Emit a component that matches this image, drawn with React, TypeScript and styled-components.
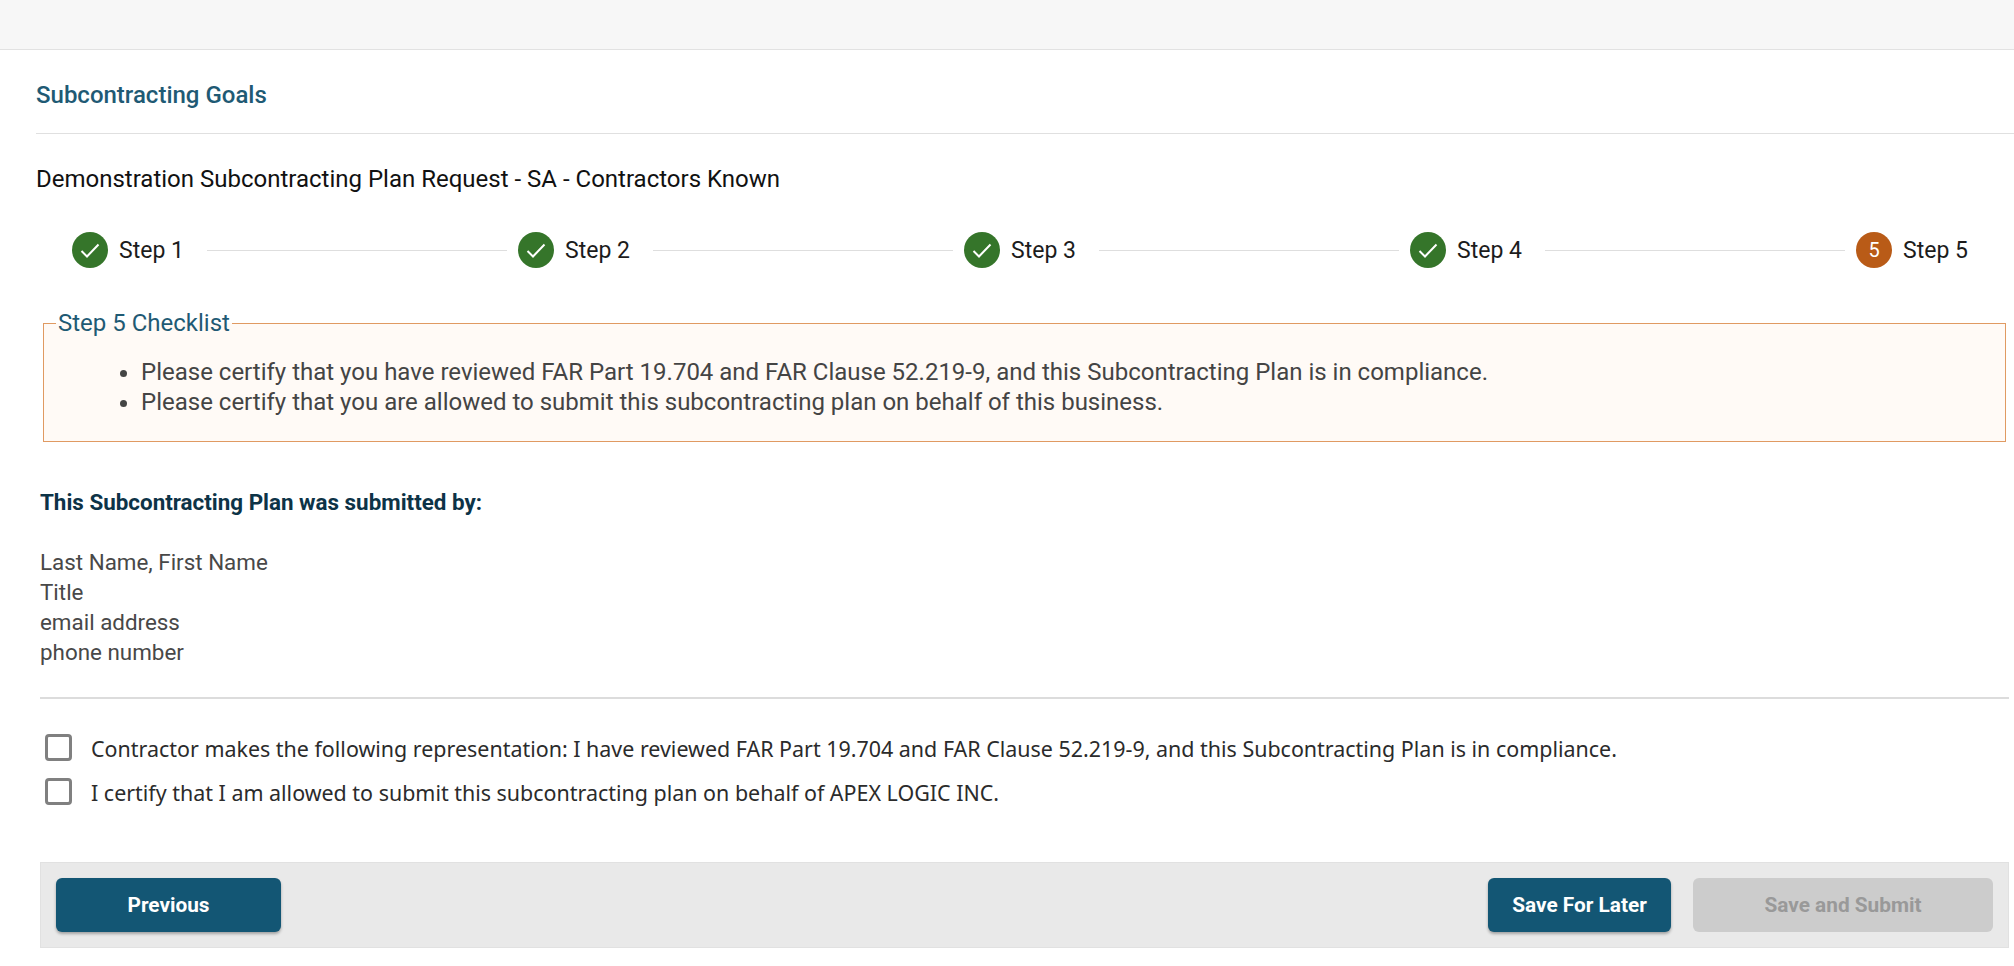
import React from 'react';
import styled, { createGlobalStyle } from 'styled-components';

const Global = createGlobalStyle`
  html, body { margin: 0; padding: 0; background: #fff; }
  body { font-family: Roboto, "Liberation Sans", sans-serif; overflow: hidden; }
  * { box-sizing: border-box; }
`;
const Page = styled.div`
  width: 2014px; height: 966px; display: flex; flex-direction: column; overflow: hidden;
`;
const TopBar = styled.div`
  height: 50px; flex: none; background: #f7f7f7; border-bottom: 1px solid #e2e2e2;
`;
const Content = styled.div`
  padding-left: 36px; display: flex; flex-direction: column;
`;
const Heading = styled.h2`
  margin: 0; height: 84px; line-height: 90px; font-size: 24px; font-weight: 500; color: #1f5a74;
  border-bottom: 1px solid #e0e0e0;
`;
const PlanTitle = styled.div`
  margin-top: 28px; line-height: 34px; font-size: 24px; color: #111;
`;
const Stepper = styled.ol`
  list-style: none; margin: 0; padding: 0 46px 0 36px; margin-top: 36px; height: 36px;
  display: flex; align-items: center;
`;
const Step = styled.li`
  display: flex; align-items: center; gap: 11px; font-size: 23px; color: #1c1c1c; flex: none;
`;
const Circle = styled.span<{ $active?: boolean }>`
  width: 36px; height: 36px; border-radius: 50%; display: flex; align-items: center; justify-content: center;
  background: ${p => (p.$active ? '#b95b17' : '#35752a')}; color: #fff; font-size: 20px;
`;
const Connector = styled.li`
  flex: 1; height: 1px; background: #dedede; margin: 0 11px 0 23px;
`;
const Fieldset = styled.fieldset`
  margin: 41px 8px 0 7px; padding: 0; height: 133px; border: 1px solid #e09a62; background: #fffaf6;
  min-width: 0;
`;
const Legend = styled.legend`
  margin-left: 12px; padding: 0 2px; font-size: 24px; line-height: 28px; color: #1f5a74;
`;
const Bullets = styled.ul`
  margin: 20px 0 0; padding-left: 97px; font-size: 24px; line-height: 30px; color: #444;
`;
const Section = styled.div`
  padding-left: 4px; margin-right: 5px; display: flex; flex-direction: column;
`;
const SubmittedBy = styled.div`
  margin-top: 46px; font-size: 22.4px; line-height: 28px; font-weight: 700; color: #0d3347;
`;
const Contact = styled.div`
  margin-top: 31px; font-size: 22.4px; line-height: 30px; color: #484848;
`;
const Rule = styled.hr`
  margin: 30px 0 0; border: 0; height: 2px; background: #dcdcdc;
`;
const Checks = styled.div`
  margin-top: 32px; display: flex; flex-direction: column; gap: 10px;
`;
const CheckRow = styled.label`
  display: flex; align-items: center; gap: 19px; padding-left: 5px; height: 34px;
  font-family: "Noto Sans", sans-serif; font-size: 21.45px; color: #2b2b2b;
`;
const Box = styled.span`
  width: 27px; height: 27px; flex: none; margin-bottom: 2px; border: 3px solid #808080; border-radius: 4px; background: #fff;
`;
const Footer = styled.div`
  margin-top: 53px; height: 86px; background: #e9e9e9; border: 1px solid #e1e1e1;
  display: flex; align-items: center; padding: 0 15px;
`;
const Button = styled.button<{ $wide?: number; $disabled?: boolean }>`
  width: ${p => p.$wide}px; height: 54px; border: 0; border-radius: 6px; font-family: Roboto, sans-serif;
  font-size: 20.8px; font-weight: 700;
  background: ${p => (p.$disabled ? '#cccccc' : '#135674')};
  color: ${p => (p.$disabled ? '#999' : '#fff')};
  box-shadow: ${p => (p.$disabled ? 'none' : '0 2px 3px rgba(0,0,0,.3)')};
`;
const Spacer = styled.div`flex: 1;`;
const Gap = styled.div`width: 22px;`;

const Tick = () => (
  <svg width="20" height="20" viewBox="0 0 20 20" fill="none" stroke="#fff" strokeWidth="2">
    <path d="M1.5 11 L7 16.5 L18.5 4.5" />
  </svg>
);

const steps = ['Step 1', 'Step 2', 'Step 3', 'Step 4', 'Step 5'];

export default function App() {
  return (
    <Page>
      <Global />
      <TopBar />
      <Content>
        <Heading>Subcontracting Goals</Heading>
        <PlanTitle>Demonstration Subcontracting Plan Request - SA - Contractors Known</PlanTitle>
        <Stepper>
          {steps.map((s, i) => (
            <React.Fragment key={s}>
              <Step>
                <Circle $active={i === 4}>{i === 4 ? '5' : <Tick />}</Circle>
                {s}
              </Step>
              {i < 4 && <Connector />}
            </React.Fragment>
          ))}
        </Stepper>
        <Fieldset>
          <Legend>Step 5 Checklist</Legend>
          <Bullets>
            <li>Please certify that you have reviewed FAR Part 19.704 and FAR Clause 52.219-9, and this Subcontracting Plan is in compliance.</li>
            <li>Please certify that you are allowed to submit this subcontracting plan on behalf of this business.</li>
          </Bullets>
        </Fieldset>
        <Section>
          <SubmittedBy>This Subcontracting Plan was submitted by:</SubmittedBy>
          <Contact>
            Last Name, First Name<br />Title<br />email address<br />phone number
          </Contact>
          <Rule />
          <Checks>
            <CheckRow><Box />Contractor makes the following representation: I have reviewed FAR Part 19.704 and FAR Clause 52.219-9, and this Subcontracting Plan is in compliance.</CheckRow>
            <CheckRow><Box />I certify that I am allowed to submit this subcontracting plan on behalf of APEX LOGIC INC.</CheckRow>
          </Checks>
          <Footer>
            <Button $wide={225}>Previous</Button>
            <Spacer />
            <Button $wide={183}>Save For Later</Button>
            <Gap />
            <Button $wide={300} $disabled>Save and Submit</Button>
          </Footer>
        </Section>
      </Content>
    </Page>
  );
}
